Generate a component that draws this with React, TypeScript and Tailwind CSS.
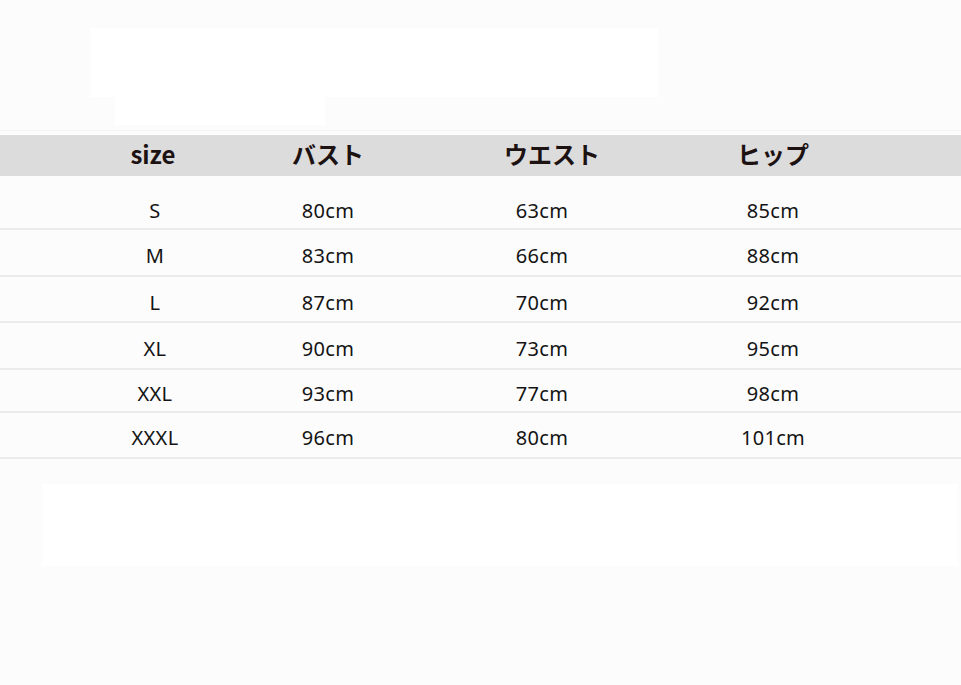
import React from "react";

const headerCells = [
  { label: "size", cls: "ml-[83px]" },
  { label: "バスト", cls: "ml-[35px]" },
  { label: "ウエスト", cls: "ml-[84px]" },
  { label: "ヒップ", cls: "ml-[81px]" },
];

const colOffsets = ["ml-[85px]", "ml-[33px]", "ml-[74px]", "ml-[91px]"];

const rows = [
  { cells: ["S", "80cm", "63cm", "85cm"], cls: "h-[54px] pt-[24px]" },
  { cells: ["M", "83cm", "66cm", "88cm"], cls: "h-[47px] pt-[15px]" },
  { cells: ["L", "87cm", "70cm", "92cm"], cls: "h-[46px] pt-[15px]" },
  { cells: ["XL", "90cm", "73cm", "95cm"], cls: "h-[47px] pt-[15px]" },
  { cells: ["XXL", "93cm", "77cm", "98cm"], cls: "h-[43px] pt-[13px]" },
  { cells: ["XXXL", "96cm", "80cm", "101cm"], cls: "h-[46px] pt-[14px]" },
];

export default function App() {
  return (
    <div className="w-[961px] h-[685px] overflow-hidden bg-[#fcfcfc]">
      {/* Top blank panels */}
      <div className="pt-[28px] pl-[90px]">
        <div className="w-[568px] h-[69px] bg-white" />
        <div className="ml-[25px] w-[210px] h-[28px] bg-white" />
      </div>

      {/* Size table */}
      <div className="mt-[5px] border-t border-[#f3f3f3]" />
      <div className="mt-[4px] h-[41px] bg-[#dcdcdc] flex items-center" style={{ fontFamily: '"Noto Sans CJK JP", "Noto Sans", sans-serif' }}>
        {headerCells.map((h) => (
          <div key={h.label} className={`${h.cls} w-[140px] text-center text-[24px] font-bold leading-[28px] -mt-[3px] text-[#1c1212]`}>
            {h.label}
          </div>
        ))}
      </div>

      <div style={{ fontFamily: '"Noto Sans", sans-serif' }}>
        {rows.map((r) => (
          <div key={r.cells[0]} className={`${r.cls} flex items-start border-b-2 border-[#ebebeb] box-border`}>
            {r.cells.map((c, i) => (
              <div key={i} className={`${colOffsets[i]} w-[140px] text-center text-[20px] tracking-[0.3px] leading-[22px] text-[#141414]`}>
                {c}
              </div>
            ))}
          </div>
        ))}
      </div>

      {/* Bottom blank panel */}
      <div className="mt-[25px] ml-[42px] w-[916px] h-[82px] bg-white" />
    </div>
  );
}
